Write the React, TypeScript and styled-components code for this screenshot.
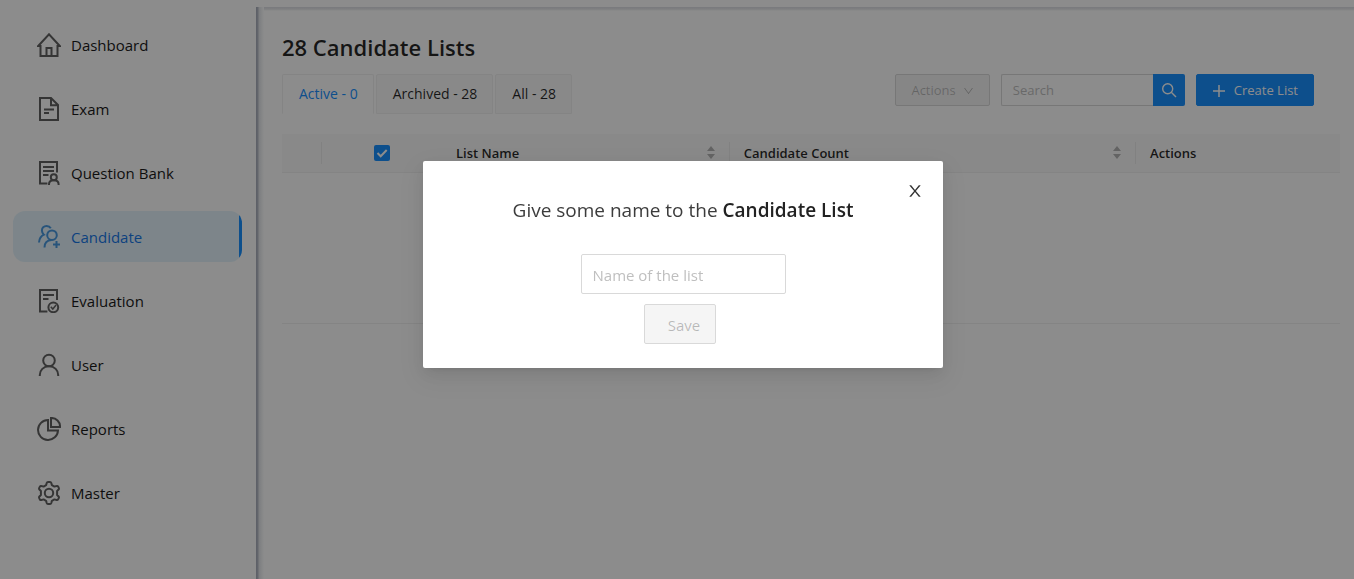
import React from "react";
import styled, { createGlobalStyle, css } from "styled-components";

const GlobalStyle = createGlobalStyle`
  * { box-sizing: border-box; }
  body {
    margin: 0;
    background: #fff;
    color: rgba(0, 0, 0, 0.85);
    font-family: "Open Sans", "Noto Sans", sans-serif;
    font-size: 13px;
    line-height: 22px;
  }
  button, input { font: inherit; }
`;

const Page = styled.div`
  display: flex;
  min-height: 100vh;
`;

const Sidebar = styled.nav`
  flex: 0 0 256px;
  padding: 19px 14px 19px 13px;
`;

const NavList = styled.ul`
  display: flex;
  flex-direction: column;
  gap: 13px;
  margin: 0;
  padding: 0;
  list-style: none;
`;

const NavLink = styled.a<{ $active?: boolean }>`
  display: flex;
  align-items: center;
  gap: 10px;
  height: 51px;
  padding: 0 24px;
  border-radius: 12px;
  color: #1b1b1b;
  font-size: 15px;
  text-decoration: none;
  ${(p) =>
    p.$active &&
    css`
      color: #1878e8;
      background: linear-gradient(to left, #1890ff 3px, #e3f3fc 3px);
    `}
`;

const NavIcon = styled.svg<{ $active?: boolean }>`
  flex: none;
  width: 24px;
  height: 24px;
  fill: none;
  stroke: ${(p) => (p.$active ? "#4a9ae0" : "#626262")};
  stroke-width: 2;
`;

const Content = styled.div`
  flex: 1;
  min-width: 0;
  display: flex;
  flex-direction: column;
`;

const TopStrip = styled.header`
  height: 7px;
`;

const Main = styled.main`
  flex: 1;
  padding: 26px 14px 24px 26px;
  background:
    linear-gradient(to right, #a8adba, #b6bbc6 2px, #e2e5e9 3px, #fff 8px) left / 8px 100% no-repeat,
    linear-gradient(#dcdee3, #e6e7ea 2px, #fff 4px) top / 100% 4px no-repeat;
`;

const Title = styled.h1`
  margin: 0;
  font-size: 22px;
  line-height: 28px;
  font-weight: 600;
`;

const Toolbar = styled.div`
  display: flex;
  justify-content: space-between;
  align-items: flex-start;
  margin-top: 13px;
  padding-right: 26px;
`;

const Tabs = styled.div`
  display: flex;
  gap: 2px;
`;

const Tab = styled.button<{ $active?: boolean }>`
  height: 40px;
  padding: 0 15px 0 16px;
  border: 1px solid #f0f0f0;
  border-radius: 2px 2px 0 0;
  background: #fafafa;
  color: rgba(0, 0, 0, 0.85);
  font-size: 14px;
  ${(p) =>
    p.$active &&
    css`
      border-bottom-color: #fff;
      background: #fff;
      color: #1890ff;
    `}
`;

const Tools = styled.div`
  display: flex;
  gap: 11px;
`;

const Button = styled.button<{ $primary?: boolean }>`
  display: flex;
  align-items: center;
  gap: ${(p) => (p.$primary ? "8px" : "7px")};
  height: 32px;
  padding: 0 15px;
  border: 1px solid ${(p) => (p.$primary ? "#1890ff" : "#d9d9d9")};
  border-radius: 2px;
  background: ${(p) => (p.$primary ? "#1890ff" : "#f5f5f5")};
  color: ${(p) => (p.$primary ? "#fff" : "rgba(0, 0, 0, 0.25)")};
`;

const SearchBox = styled.form`
  display: flex;
  width: 184px;
  height: 32px;
`;

const SearchInput = styled.input`
  flex: 1;
  min-width: 0;
  padding: 0 11px;
  border: 1px solid #d9d9d9;
  border-right: 0;
  border-radius: 2px 0 0 2px;
  background: #fff;
  &::placeholder { color: #bfbfbf; }
`;

const SearchButton = styled.button`
  display: flex;
  align-items: center;
  justify-content: center;
  width: 32px;
  padding: 0;
  border: 0;
  border-radius: 0 2px 2px 0;
  background: #1890ff;
  color: #fff;
`;

const Glyph = styled.svg`
  fill: none;
  stroke: currentColor;
`;

const Table = styled.table`
  width: 100%;
  margin-top: 20px;
  border-collapse: separate;
  border-spacing: 0;
  table-layout: fixed;
`;

const HeadCell = styled.th<{ $width?: string; $divider?: boolean; $center?: boolean }>`
  width: ${(p) => p.$width ?? "auto"};
  height: 39px;
  padding: 0 14px;
  border-bottom: 1px solid #f0f0f0;
  background: ${(p) =>
      p.$divider ? "linear-gradient(#ececec, #ececec) right center / 1px 22px no-repeat," : ""}
    linear-gradient(#fafafa, #fafafa);
  font-weight: 600;
  text-align: ${(p) => (p.$center ? "center" : "left")};
`;

const Sortable = styled.div`
  display: flex;
  align-items: center;
  justify-content: space-between;
`;

const EmptyCell = styled.td`
  height: 151px;
  border-bottom: 1px solid #f0f0f0;
`;

const Checkbox = styled.input`
  appearance: none;
  display: block;
  width: 16px;
  height: 16px;
  margin: 0 auto;
  border-radius: 2px;
  background: #1890ff;
`;

const CheckLabel = styled.label`
  display: grid;
  justify-content: center;
  & > * { grid-area: 1 / 1; }
`;

const Overlay = styled.div`
  position: fixed;
  inset: 0;
  display: flex;
  align-items: center;
  justify-content: center;
  padding: 0 0 50px 12px;
  background: rgba(0, 0, 0, 0.45);
`;

const Dialog = styled.section`
  display: flex;
  flex-direction: column;
  align-items: center;
  width: 520px;
  max-width: 100%;
  padding: 20px 19px 24px;
  border-radius: 2px;
  background: #fff;
  box-shadow: 0 3px 6px -4px rgba(0, 0, 0, 0.12), 0 6px 16px 0 rgba(0, 0, 0, 0.08),
    0 9px 28px 8px rgba(0, 0, 0, 0.05);
`;

const CloseButton = styled.button`
  display: flex;
  align-self: flex-end;
  padding: 0;
  border: 0;
  background: none;
  color: #333;
`;

const DialogTitle = styled.h2`
  margin: 0 0 35px;
  font-size: 19px;
  line-height: 18px;
  font-weight: 400;
  color: #3c3c3c;
  b {
    font-weight: 600;
    color: #222;
  }
`;

const NameInput = styled.input`
  width: 205px;
  height: 40px;
  padding: 1px 11px 0;
  border: 1px solid #d9d9d9;
  border-radius: 2px;
  font-size: 15px;
  &::placeholder { color: #bfbfbf; }
`;

const SaveButton = styled.button`
  height: 40px;
  margin: 10px 6px 0 0;
  padding: 1px 15px 0 23px;
  border: 1px solid #d9d9d9;
  border-radius: 2px;
  background: #f5f5f5;
  color: rgba(0, 0, 0, 0.25);
  font-size: 15px;
`;

const icons: Record<string, React.ReactNode> = {
  Dashboard: (
    <path d="M3.5 13H1.2L12 1.300 22.800 13h-2.300v10h-17V13zM9.500 23v-8h5v8" />
  ),
  Exam: <path d="M3 1h11l7 7v15H3zM14 1v7.300h7M7 12.500h10M7 16h5" />,
  "Question Bank": (
    <>
      <path d="M20 11.500V1H3v21.500h7.400M6 6h11M6 10h11M6 14h5.500" />
      <circle cx="16.800" cy="16.200" r="3" />
      <path d="M12 24v-.8c0-2.200 1.800-4 4.800-4s4.800 1.800 4.800 4v.8" />
    </>
  ),
  Candidate: (
    <>
      <circle cx="15" cy="10.200" r="4.800" />
      <path d="M7.500 22.500c0-4.600 2.500-7.200 7-7.500M13.800 3.200C12.800 1.500 11.400 1 9.600 1 6.800 1 4.900 3 4.900 5.600c0 1.800.7 3.100 2 4.100C4.500 10.800 2.300 13.500 2 17.500M16 19.500h7M19.500 16v7" />
    </>
  ),
  Evaluation: (
    <>
      <path d="M20 11V1H3v21.600h7.400M6 6h11M6 10h5.500" />
      <circle cx="16.300" cy="18.300" r="4.900" />
      <path d="M13.800 17.800l2 2.300 3.300-4" strokeWidth="1.500" />
    </>
  ),
  User: (
    <>
      <circle cx="12" cy="7.500" r="5.800" />
      <path d="M2.800 23v-1c0-4.800 3.600-8.700 9.200-8.700s9.200 3.900 9.200 8.700v1" />
    </>
  ),
  Reports: (
    <path d="M11 3A10 10 0 1 0 21 13.500H11zM14 1A8.500 8.500 0 0 1 23 10h-9z" />
  ),
  Master: (
    <>
      <circle cx="12" cy="12" r="4.200" />
      <path
        strokeLinejoin="round"
        d="M11 1h2q1 0 1.300 1l.6 2.200 2.500 1.400 2.200-.6q1-.3 1.500.6l.7 1.300q.5.900-.2 1.600L20.100 10v4l1.500 1.500q.7.700.2 1.600l-.7 1.300q-.5.900-1.500.6l-2.200-.6-2.500 1.400-.6 2.200q-.3 1-1.300 1h-2q-1 0-1.300-1l-.6-2.200-2.500-1.400-2.200.6q-1 .3-1.500-.6l-.7-1.300q-.5-.9.200-1.600L3.900 14v-4L2.400 8.500q-.7-.7-.2-1.600l.7-1.300q.5-.9 1.500-.6l2.200.6 2.500-1.400.6-2.200q.3-1 1.300-1z"
      />
    </>
  ),
};

const Sorter = () => (
  <svg width="10" height="14" viewBox="0 0 10 14" fill="#b5b5b5" aria-hidden="true">
    <path d="M5 0L9 5H1zM5 13L1 8h8z" />
  </svg>
);

export default function App() {
  return (
    <>
      <GlobalStyle />
      <Page>
        <Sidebar>
          <NavList>
            {Object.entries(icons).map(([name, icon]) => {
              const active = name === "Candidate";
              return (
                <li key={name}>
                  <NavLink href="#" $active={active}>
                    <NavIcon viewBox="0 0 24 24" $active={active} aria-hidden="true">
                      {icon}
                    </NavIcon>
                    {name}
                  </NavLink>
                </li>
              );
            })}
          </NavList>
        </Sidebar>
        <Content>
          <TopStrip />
          <Main>
            <Title>28 Candidate Lists</Title>
            <Toolbar>
              <Tabs role="tablist">
                <Tab role="tab" aria-selected $active>Active - 0</Tab>
                <Tab role="tab">Archived - 28</Tab>
                <Tab role="tab">All - 28</Tab>
              </Tabs>
              <Tools>
                <Button disabled>
                  Actions
                  <Glyph width="11" height="12" viewBox="0 0 11 12" aria-hidden="true">
                    <path d="M1.500 4l4 5.500 4-5.500" />
                  </Glyph>
                </Button>
                <SearchBox>
                  <SearchInput placeholder="Search" aria-label="Search" />
                  <SearchButton type="button" aria-label="Run search">
                    <Glyph width="16" height="16" viewBox="0 0 16 16" strokeWidth="1.400" aria-hidden="true">
                      <circle cx="6.700" cy="6.700" r="5" />
                      <path d="M10.300 10.300L15 15" />
                    </Glyph>
                  </SearchButton>
                </SearchBox>
                <Button $primary>
                  <Glyph width="14" height="14" viewBox="0 0 14 14" strokeWidth="1.500" aria-hidden="true">
                    <path d="M7 2v12M1 8h12" />
                  </Glyph>
                  Create List
                </Button>
              </Tools>
            </Toolbar>
            <Table>
              <thead>
                <tr>
                  <HeadCell $width="40px" $divider />
                  <HeadCell $width="120px" $center>
                    <CheckLabel>
                      <Checkbox type="checkbox" defaultChecked aria-label="Select all lists" />
                      <svg width="16" height="16" viewBox="0 0 16 16" fill="none" stroke="#fff" strokeWidth="2" aria-hidden="true">
                        <path d="M3.500 8l3.200 3.200 6-6.200" />
                      </svg>
                    </CheckLabel>
                  </HeadCell>
                  <HeadCell $width="27.2%" $divider>
                    <Sortable>List Name <Sorter /></Sortable>
                  </HeadCell>
                  <HeadCell $width="38.4%" $divider>
                    <Sortable>Candidate Count <Sorter /></Sortable>
                  </HeadCell>
                  <HeadCell>Actions</HeadCell>
                </tr>
              </thead>
              <tbody>
                <tr>
                  <EmptyCell colSpan={5} />
                </tr>
              </tbody>
            </Table>
          </Main>
        </Content>
      </Page>
      <Overlay>
        <Dialog role="dialog" aria-modal="true" aria-labelledby="dialog-title">
          <CloseButton aria-label="Close">
            <svg width="18" height="20" viewBox="0 0 1024 1024" fill="currentColor">
              <path d="M563.8 512l262.500-312.900c4.400-5.200.7-13.100-6.100-13.100h-79.800c-4.700 0-9.200 2.100-12.300 5.700L511.600 449.800 295.100 191.700c-3-3.600-7.500-5.700-12.300-5.700H203c-6.800 0-10.500 7.900-6.100 13.100L459.400 512 196.900 824.900A7.950 7.950 0 0 0 203 838h79.800c4.700 0 9.200-2.100 12.300-5.700l216.500-258.100 216.500 258.100c3 3.600 7.500 5.700 12.300 5.700h79.800c6.800 0 10.500-7.900 6.100-13.100L563.800 512z" />
            </svg>
          </CloseButton>
          <DialogTitle id="dialog-title">
            Give some name to the <b>Candidate List</b>
          </DialogTitle>
          <NameInput placeholder="Name of the list" aria-label="Name of the list" />
          <SaveButton disabled>Save</SaveButton>
        </Dialog>
      </Overlay>
    </>
  );
}
